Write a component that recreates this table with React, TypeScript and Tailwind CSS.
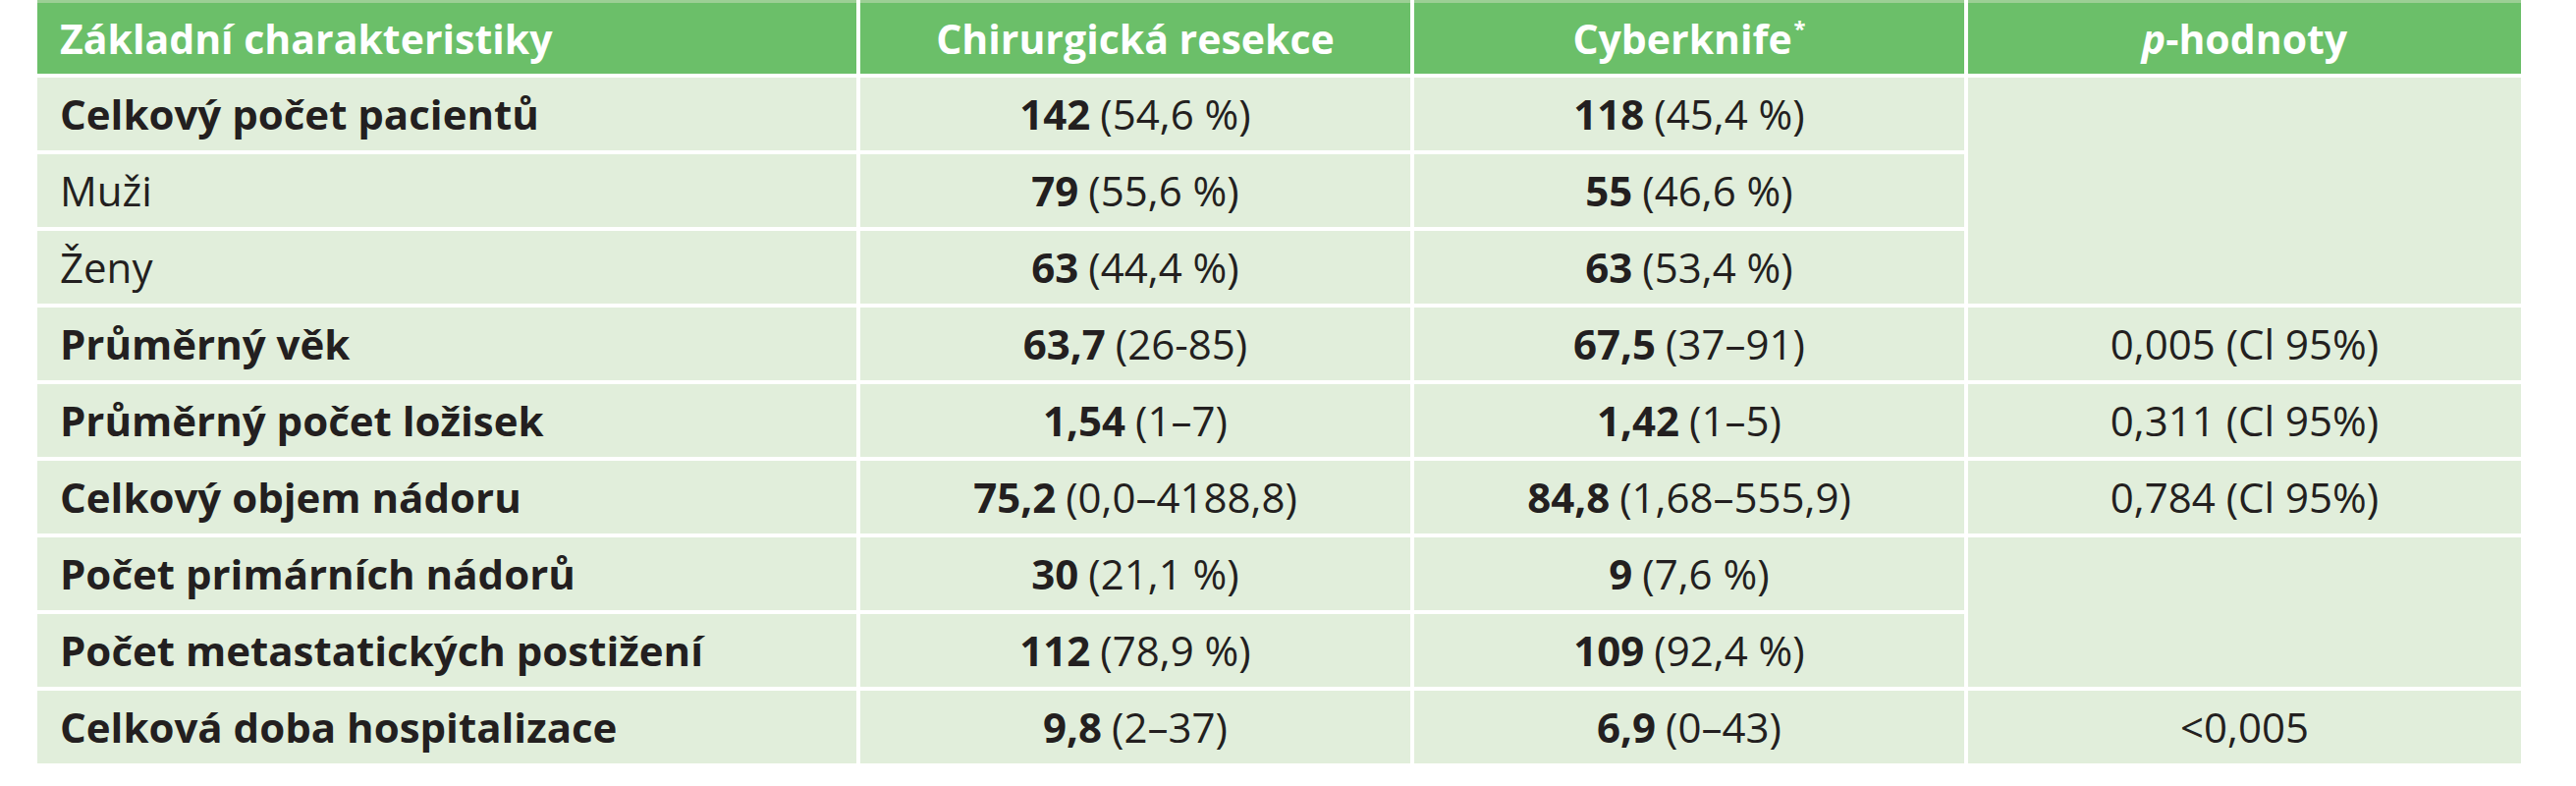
const rows: { label: string; bold: boolean; a: [string, string]; b: [string, string] }[] = [
  { label: "Celkový počet pacientů", bold: true, a: ["142", "(54,6 %)"], b: ["118", "(45,4 %)"] },
  { label: "Muži", bold: false, a: ["79", "(55,6 %)"], b: ["55", "(46,6 %)"] },
  { label: "Ženy", bold: false, a: ["63", "(44,4 %)"], b: ["63", "(53,4 %)"] },
  { label: "Průměrný věk", bold: true, a: ["63,7", "(26-85)"], b: ["67,5", "(37–91)"] },
  { label: "Průměrný počet ložisek", bold: true, a: ["1,54", "(1–7)"], b: ["1,42", "(1–5)"] },
  { label: "Celkový objem nádoru", bold: true, a: ["75,2", "(0,0–4188,8)"], b: ["84,8", "(1,68–555,9)"] },
  { label: "Počet primárních nádorů", bold: true, a: ["30", "(21,1 %)"], b: ["9", "(7,6 %)"] },
  { label: "Počet metastatických postižení", bold: true, a: ["112", "(78,9 %)"], b: ["109", "(92,4 %)"] },
  { label: "Celková doba hospitalizace", bold: true, a: ["9,8", "(2–37)"], b: ["6,9", "(0–43)"] },
];

// p-hodnoty column, with merged cells
const pCells: { value: string; span: string; row: string }[] = [
  { value: "", span: "row-span-3", row: "row-start-2" },
  { value: "0,005 (Cl 95%)", span: "row-span-1", row: "row-start-5" },
  { value: "0,311 (Cl 95%)", span: "row-span-1", row: "row-start-6" },
  { value: "0,784 (Cl 95%)", span: "row-span-1", row: "row-start-7" },
  { value: "", span: "row-span-2", row: "row-start-8" },
  { value: "<0,005", span: "row-span-1", row: "row-start-10" },
];

function Value({ v }: { v: [string, string] }) {
  return (
    <div className="bg-[#e1eedb] flex items-center justify-center">
      <span className="font-bold">{v[0]}</span>
      <span className="ml-[10px]">{v[1]}</span>
    </div>
  );
}

export default function App() {
  return (
    <div
      className="w-[2623px] h-[800px] bg-white pl-[38px] text-[#231f20] text-[42px] leading-none"
      style={{ fontFamily: '"Open Sans", sans-serif' }}
    >
      <div className="grid grid-cols-[834px_560px_560px_563px] grid-rows-[75px_repeat(9,74px)] gap-[4px] w-[2529px]">
        {/* Header */}
        <div className="bg-[#6bbf69] border-t-[3px] border-[#9ccf95] flex items-center pl-[23px] text-white font-bold text-[41px]">
          Základní charakteristiky
        </div>
        <div className="bg-[#6bbf69] border-t-[3px] border-[#9ccf95] flex items-center justify-center text-white font-bold text-[41px]">
          Chirurgická resekce
        </div>
        <div className="bg-[#6bbf69] border-t-[3px] border-[#9ccf95] flex items-center justify-center text-white font-bold text-[41px]">
          Cyberknife
          <span className="text-[22px] self-start mt-[14px] ml-[2px]">*</span>
        </div>
        <div className="bg-[#6bbf69] border-t-[3px] border-[#9ccf95] flex items-center justify-center text-white font-bold text-[41px]">
          <span className="italic">p</span>-hodnoty
        </div>

        {/* Body */}
        {rows.map((r, i) => (
          <div key={r.label} className="contents">
            <div
              className={`bg-[#e1eedb] flex items-center pl-[23px] col-start-1 ${r.bold ? "font-bold" : ""}`}
              style={{ gridRowStart: i + 2 }}
            >
              {r.label}
            </div>
            <div className="contents">
              <div className="col-start-2 grid" style={{ gridRowStart: i + 2 }}>
                <Value v={r.a} />
              </div>
              <div className="col-start-3 grid" style={{ gridRowStart: i + 2 }}>
                <Value v={r.b} />
              </div>
            </div>
          </div>
        ))}

        {pCells.map((c, i) => (
          <div
            key={i}
            className={`bg-[#e1eedb] col-start-4 ${c.row} ${c.span} flex items-center justify-center`}
          >
            {c.value}
          </div>
        ))}
      </div>
    </div>
  );
}
